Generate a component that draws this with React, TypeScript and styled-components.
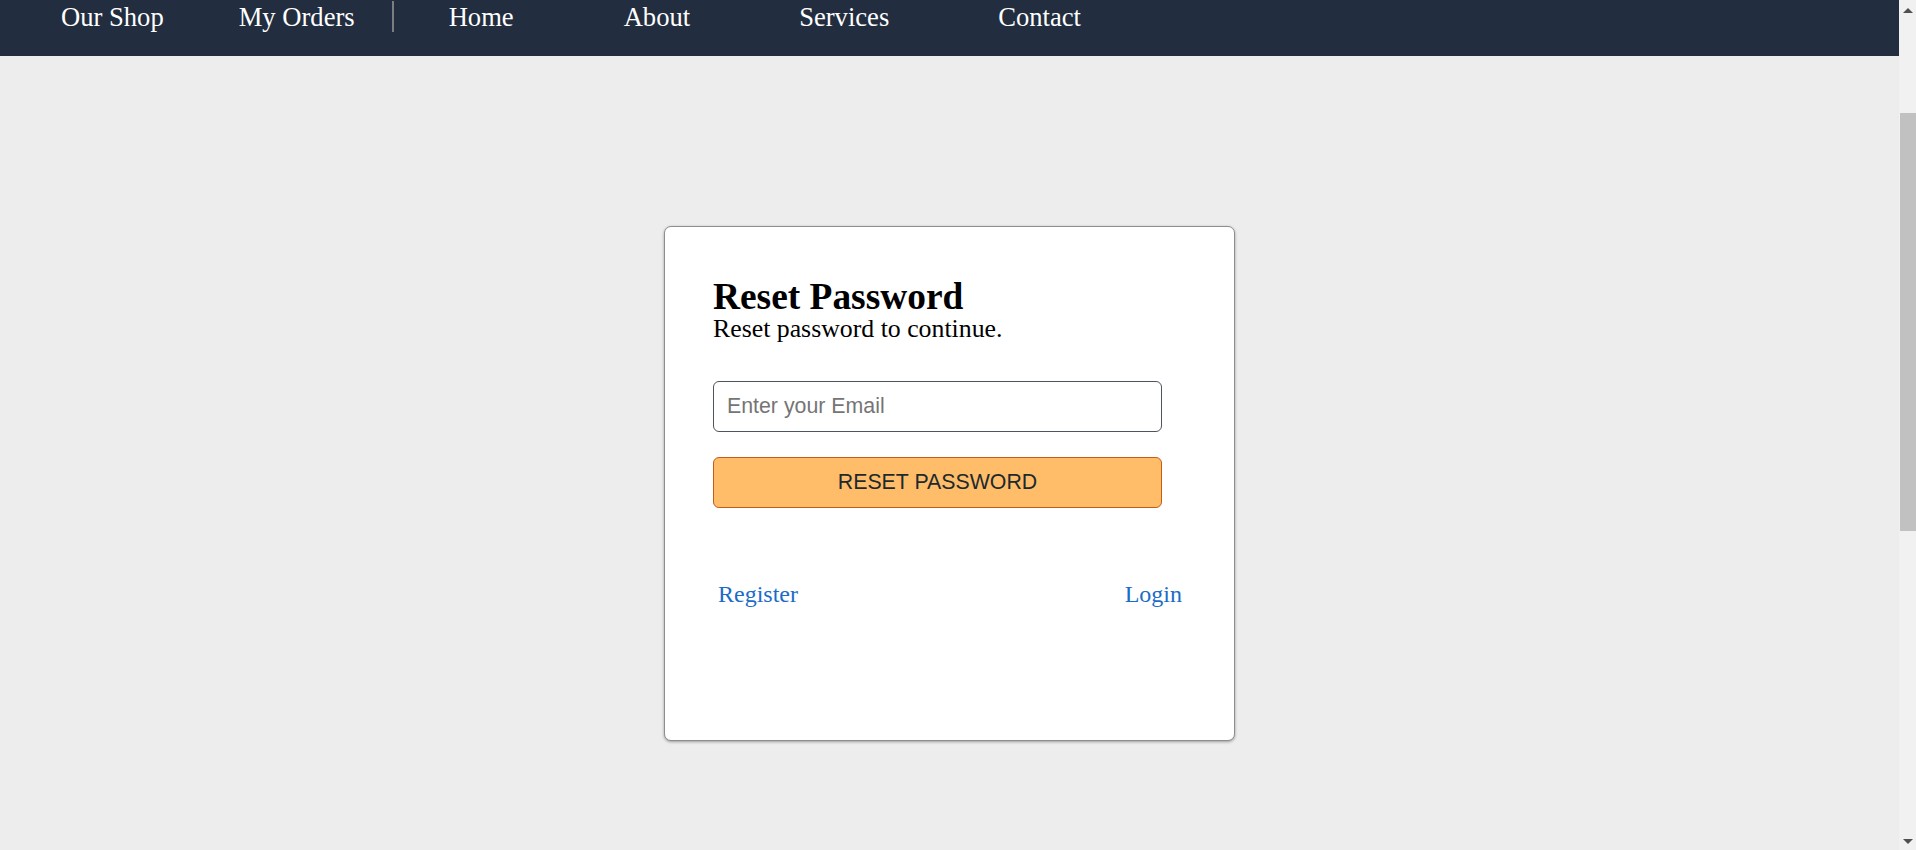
import React from "react";
import styled, { createGlobalStyle } from "styled-components";

const GlobalStyle = createGlobalStyle`
  html, body {
    margin: 0;
    padding: 0;
    background: #ededed;
    font-family: "Liberation Serif", "Times New Roman", serif;
    overflow: hidden;
  }
  * { box-sizing: border-box; }
`;

const Screen = styled.div`
  display: flex;
  width: 100%;
  height: 850px;
  overflow: hidden;
`;

const Main = styled.div`
  flex: 1;
  display: flex;
  flex-direction: column;
  align-items: stretch;
  background: #ededed;
`;

const NavBar = styled.nav`
  height: 56px;
  background: #222e3f;
  display: flex;
  align-items: flex-start;
  padding-left: 61px;
`;

const NavItem = styled.a<{ $gap: number }>`
  margin-left: ${(p) => p.$gap}px;
  padding-top: 2px;
  color: #ffffff;
  font-family: "Liberation Serif", "Times New Roman", serif;
  font-size: 26.6px;
  line-height: normal;
  text-decoration: none;
  white-space: nowrap;
`;

const Divider = styled.span`
  margin-left: 37px;
  margin-top: 1px;
  width: 2px;
  height: 31px;
  background: #7b7d80;
`;

const Content = styled.main`
  flex: 1;
  display: flex;
  justify-content: center;
  align-items: flex-start;
  padding-top: 170px;
`;

const Card = styled.section`
  width: 571px;
  height: 515px;
  background: #ffffff;
  border: 1px solid #8d8d8d;
  border-radius: 7px;
  box-shadow: 0 1px 3px rgba(0, 0, 0, 0.35);
  padding: 51px 48px 0 48px;
  display: flex;
  flex-direction: column;
`;

const Title = styled.h2`
  margin: 0;
  font-family: "Liberation Serif", "Times New Roman", serif;
  font-weight: bold;
  font-size: 37.4px;
  line-height: 1;
  color: #000;
`;

const Subtitle = styled.p`
  margin: 0;
  font-family: "Liberation Serif", "Times New Roman", serif;
  font-size: 25.8px;
  line-height: 1.1;
  color: #000;
`;

const EmailInput = styled.input`
  margin-top: 37px;
  width: 449px;
  height: 51px;
  border: 1px solid #4e545d;
  border-radius: 6px;
  padding: 0 13px;
  font-family: "Liberation Sans", Arial, sans-serif;
  font-size: 21.33px;
  color: #222;
  background: #fff;
  outline: none;
  &::placeholder {
    color: #757575;
  }
`;

const SubmitButton = styled.button`
  margin-top: 25px;
  width: 449px;
  height: 51px;
  background: #ffbd6a;
  border: 1px solid #c65b14;
  border-radius: 6px;
  font-family: "Liberation Sans", Arial, sans-serif;
  font-size: 21.33px;
  color: #1d2a2d;
  text-transform: uppercase;
  cursor: pointer;
`;

const LinkRow = styled.div`
  margin-top: 73px;
  display: flex;
  justify-content: space-between;
  padding: 0 4px 0 5px;
`;

const TextLink = styled.a`
  font-family: "Liberation Serif", "Times New Roman", serif;
  font-size: 24px;
  line-height: normal;
  color: #1a6cc8;
  text-decoration: none;
`;

const ScrollBar = styled.div`
  width: 17px;
  height: 850px;
  background: #f1f1f1;
  display: flex;
  flex-direction: column;
`;

const ScrollButton = styled.div<{ $down?: boolean }>`
  height: 17px;
  display: flex;
  justify-content: center;
  align-items: ${(p) => (p.$down ? "flex-end" : "flex-start")};
  padding: ${(p) => (p.$down ? "0 0 6px 1px" : "8px 0 0 1px")};
`;

const Track = styled.div`
  flex: 1;
  display: flex;
  flex-direction: column;
  padding-left: 1px;
`;

const Thumb = styled.div`
  margin-top: 96px;
  height: 418px;
  background: #c1c1c1;
`;

const Arrow = ({ down }: { down?: boolean }) => (
  <svg width="10" height="5" viewBox="0 0 10 5">
    {down ? (
      <polygon points="0,0 10,0 5,5" fill="#505050" />
    ) : (
      <polygon points="0,5 10,5 5,0" fill="#505050" />
    )}
  </svg>
);

const navLeft = [
  { label: "Our Shop", gap: 0 },
  { label: "My Orders", gap: 75 },
];

const navRight = [
  { label: "Home", gap: 55 },
  { label: "About", gap: 110 },
  { label: "Services", gap: 109 },
  { label: "Contact", gap: 109 },
];

export default function App() {
  return (
    <>
      <GlobalStyle />
      <Screen>
        <Main>
          <NavBar>
            {navLeft.map((n) => (
              <NavItem key={n.label} href="#" $gap={n.gap}>
                {n.label}
              </NavItem>
            ))}
            <Divider />
            {navRight.map((n) => (
              <NavItem key={n.label} href="#" $gap={n.gap}>
                {n.label}
              </NavItem>
            ))}
          </NavBar>
          <Content>
            <Card>
              <Title>Reset Password</Title>
              <Subtitle>Reset password to continue.</Subtitle>
              <EmailInput type="email" placeholder="Enter your Email" />
              <SubmitButton type="button">Reset Password</SubmitButton>
              <LinkRow>
                <TextLink href="#">Register</TextLink>
                <TextLink href="#">Login</TextLink>
              </LinkRow>
            </Card>
          </Content>
        </Main>
        <ScrollBar>
          <ScrollButton>
            <Arrow />
          </ScrollButton>
          <Track>
            <Thumb />
          </Track>
          <ScrollButton $down>
            <Arrow down />
          </ScrollButton>
        </ScrollBar>
      </Screen>
    </>
  );
}
